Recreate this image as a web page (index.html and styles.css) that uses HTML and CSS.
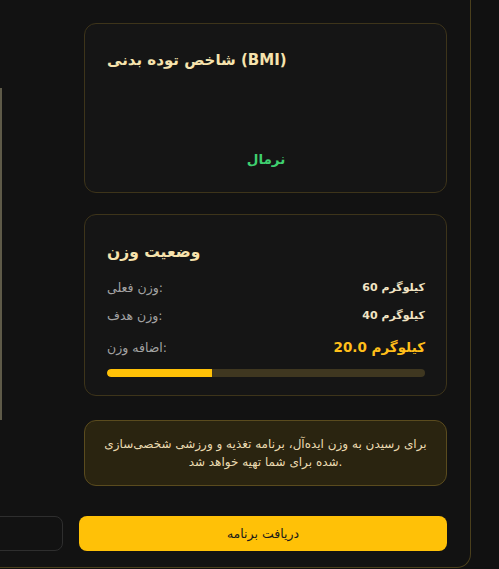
FILE: index.html
```html
<!DOCTYPE html>
<html lang="fa">
<head>
<meta charset="utf-8">
<title>BMI</title>
<link rel="stylesheet" href="styles.css">
</head>
<body>
<div class="panel">
  <div class="grid">
    <div class="cards">
      <section class="card bmi-card">
        <h2 class="card-title">شاخص توده بدنی (BMI)</h2>
        <div class="gauge"></div>
        <div class="bmi-status">نرمال</div>
      </section>
      <section class="card weight-card">
        <h2 class="card-title">وضعیت وزن</h2>
        <div class="row">
          <span class="label">وزن فعلی:</span>
          <span class="value">60 کیلوگرم</span>
        </div>
        <div class="row">
          <span class="label">وزن هدف:</span>
          <span class="value">40 کیلوگرم</span>
        </div>
        <div class="row row-big">
          <span class="label">اضافه وزن:</span>
          <span class="value value-big">20.0 کیلوگرم</span>
        </div>
        <div class="bar"><div class="bar-fill" style="width:33%"></div></div>
      </section>
      <div class="note">برای رسیدن به وزن ایده‌آل، برنامه تغذیه و ورزشی شخصی‌سازی شده برای شما تهیه خواهد شد.</div>
    </div>
    <div class="side">
      <div class="figure"></div>
    </div>
  </div>
  <div class="actions">
    <button class="btn btn-primary">دریافت برنامه</button>
    <button class="btn btn-outline">بازگشت</button>
  </div>
</div>
</body>
</html>
```
FILE: styles.css
```css
html, body {
  margin: 0;
  padding: 0;
  background: #111111;
  overflow: hidden;
}
body {
  direction: rtl;
  font-family: "DejaVu Sans", sans-serif;
  height: 569px;
}
.panel {
  width: 754px;
  margin-right: 28px;
  padding: 23px 23px 16px 22px;
  border-right: 1px solid #4a3f1c;
  border-bottom: 1px solid #4a3f1c;
  border-bottom-right-radius: 14px;
  background: #121212;
}
.grid {
  display: grid;
  grid-template-columns: 363px 1fr;
  column-gap: 22px;
}
.cards {
  direction: ltr;
  display: flex;
  flex-direction: column;
}
.card {
  background: #151515;
  border: 1px solid #3d341a;
  border-radius: 12px;
  padding: 23px 21px 18px 22px;
}
.card-title {
  margin: 0;
  color: #f6e3ad;
  font-weight: bold;
}
.bmi-card {
  padding-top: 24px;
  padding-bottom: 23px;
}
.bmi-card .card-title {
  font-size: 15px;
  line-height: 24px;
}
.gauge {
  height: 77px;
}
.bmi-status {
  text-align: center;
  color: #3fcf6f;
  font-weight: bold;
  font-size: 13.5px;
  line-height: 20px;
}
.weight-card {
  margin-top: 21px;
}
.weight-card .card-title {
  font-size: 15.5px;
  line-height: 28px;
  margin-bottom: 11px;
}
.row {
  display: flex;
  justify-content: space-between;
  align-items: center;
  height: 20px;
  margin-bottom: 8px;
}
.row-big {
  height: 28px;
  margin-bottom: 8px;
}
.label {
  color: #a3a3a3;
  font-size: 12.5px;
}
.value {
  color: #f1e4c4;
  font-size: 11px;
  font-weight: bold;
}
.value-big {
  color: #ffbf1a;
  font-size: 13.5px;
}
.bar {
  height: 8px;
  border-radius: 4px;
  background: #3f3720;
  overflow: hidden;
}
.bar-fill {
  height: 100%;
  background: #ffc107;
  border-radius: 4px 0 0 4px;
}
.note {
  margin-top: 24px;
  background: #2a2410;
  border: 1px solid #5a4b1e;
  border-radius: 12px;
  padding: 14px 12px;
  color: #eadbb0;
  font-size: 12px;
  line-height: 18px;
  text-align: center;
}
.side {
  display: flex;
  justify-content: flex-start;
}
.figure {
  width: 240px;
  height: 332px;
  margin-top: 65px;
  margin-right: 60px;
  border-right: 2px solid #5e5a48;
  background: #161616;
}
.actions {
  display: flex;
  gap: 16px;
  margin-top: 30px;
}
.btn {
  flex: 1;
  height: 35px;
  border-radius: 8px;
  font-family: "DejaVu Sans", sans-serif;
  font-size: 12.5px;
}
.btn-primary {
  background: #ffc107;
  border: none;
  color: #1a1a1a;
}
.btn-outline {
  background: transparent;
  border: 1px solid #2e2e2e;
  color: #cccccc;
}
```
